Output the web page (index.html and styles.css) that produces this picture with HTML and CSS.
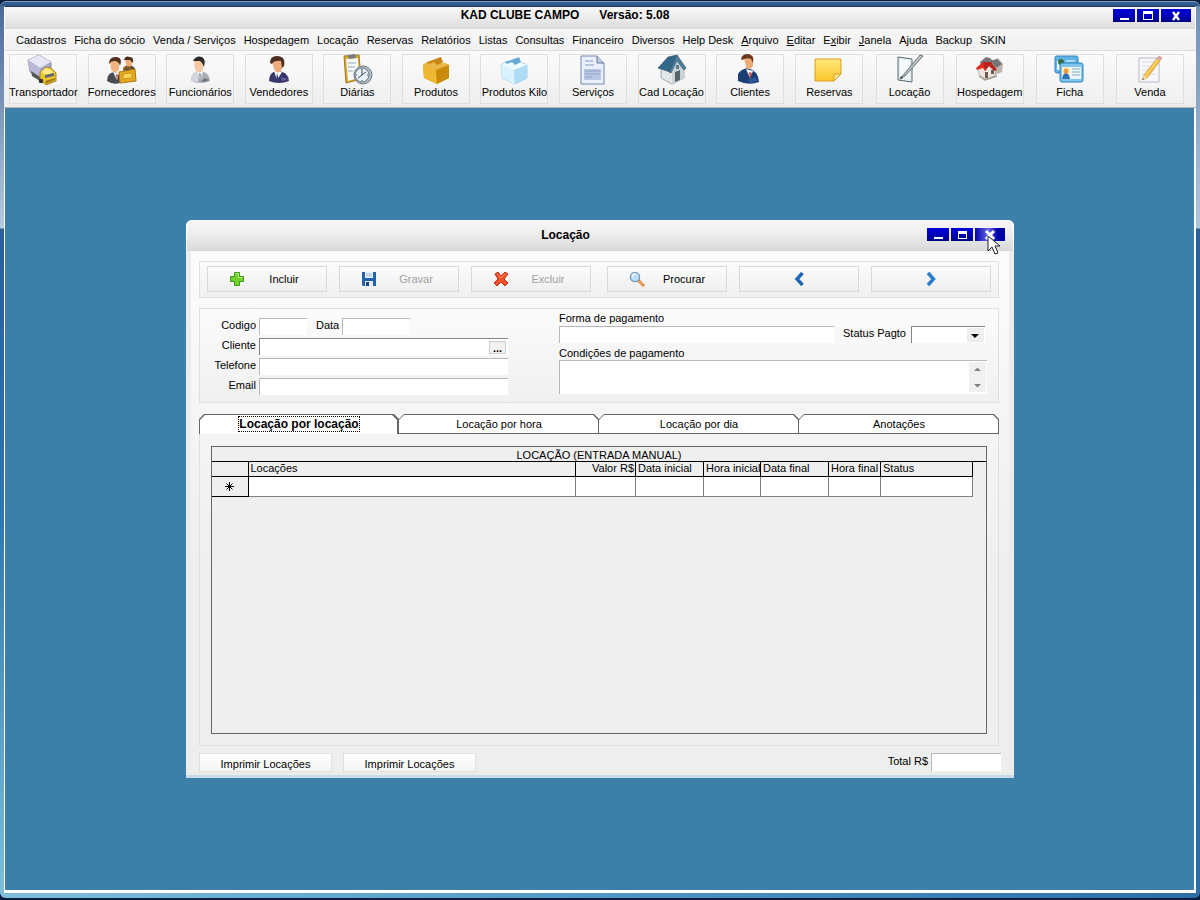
FILE: index.html
```html
<!DOCTYPE html>
<html lang="pt-BR">
<head>
<meta charset="utf-8">
<title>KAD CLUBE CAMPO</title>
<link rel="stylesheet" href="styles.css">
</head>
<body>
<div class="app">
  <header class="titlebar">
    <h1 class="title"><span>KAD CLUBE CAMPO</span><span>Versão: 5.08</span></h1>
    <div class="controls">
      <button class="ctl" aria-label="Minimizar"><svg width="12" height="12" viewBox="0 0 12 12"><path d="M2 8h9v2H2z" fill="#fff"/></svg></button>
      <button class="ctl" aria-label="Maximizar"><svg width="12" height="12" viewBox="0 0 12 12"><path d="M1 1h10v9H1zM2 4v5h8V4z" fill="#fff" fill-rule="evenodd"/></svg></button>
      <button class="ctl ctl-close" aria-label="Fechar"><svg width="12" height="12" viewBox="0 0 12 12"><path d="M3 2l6 8M9 2l-6 8" stroke="#fff" stroke-width="2.4"/></svg></button>
    </div>
  </header>
  <nav class="menu">
    <a href="#">Cadastros</a><a href="#">Ficha do sócio</a><a href="#">Venda / Serviços</a><a href="#">Hospedagem</a><a href="#">Locação</a><a href="#">Reservas</a><a href="#">Relatórios</a><a href="#">Listas</a><a href="#">Consultas</a><a href="#">Financeiro</a><a href="#">Diversos</a><a href="#">Help Desk</a><a href="#"><u>A</u>rquivo</a><a href="#"><u>E</u>ditar</a><a href="#">E<u>x</u>ibir</a><a href="#"><u>J</u>anela</a><a href="#">Ajuda</a><a href="#">Backup</a><a href="#">SKIN</a>
  </nav>
  <div class="toolbar">
    <button class="tool"><svg viewBox="0 0 32 32"><path d="M1 6L12 1l12 7v9l-11 7L3 18z" fill="#a9a8c8" stroke="#77769c" stroke-width=".7"/><path d="M1 6L12 1l12 7-11 6z" fill="#e6e6f4"/><path d="M1 6l12 8v10L3 18z" fill="#b9b8d8"/><path d="M4 17l9 6v4l-8-5z" fill="#555"/><path d="M13 18l6-5 5 1 5 5v8l-10 4-6-5z" fill="#edc62e" stroke="#987216" stroke-width=".8"/><path d="M14 18l5-4 4 1 4 4-8 2z" fill="#ffe982"/><path d="M18 21l9-2v3l-9 2z" fill="#5f6873"/><path d="M18 27l10-3v2l-9 4z" fill="#a77a19"/><circle cx="14" cy="27" r="2.3" fill="#333"/></svg>Transportador</button>
    <button class="tool"><svg viewBox="0 0 32 32"><path d="M18 13l5-3 6 4v6H17z" fill="#4b4b50"/><path d="M19 4q4-3 7 1v6q-3 4-6 0z" fill="#efb07c"/><path d="M18 6q1-5 6-3 4 0 3 6l-3-3z" fill="#4b3021"/><path d="M1 27q0-8 7-9l8 2 1 8q-9 4-16-1z" fill="#4a4a55"/><path d="M7 18l4 8 2-7z" fill="#fff"/><path d="M10 20l1 6 1-5z" fill="#a83232"/><path d="M4 7q6-5 9 1v7q-4 7-8 0z" fill="#f1b481"/><path d="M3 10q0-8 8-7 6 1 3 9-1-5-6-5-3 0-5 3z" fill="#54301d"/><path d="M13 18l16-3 1 12-16 2z" fill="#e4a91c" stroke="#ae7710"/><path d="M18 16v-2l6-1v3" fill="none" stroke="#9a6710" stroke-width="1.5"/><path d="M17 20l9-1v5l-9 1z" fill="#f9d555" stroke="#c0851b" stroke-width=".7"/></svg>Fornecedores</button>
    <button class="tool"><svg viewBox="0 0 32 32"><path d="M7 27q0-9 8-10 10 0 11 10-9 4-19 0z" fill="#aaaeb6"/><path d="M8 21q4-5 7-4l-1 11-7-1z" fill="#d4d8de"/><path d="M13 17l3 9 3-8z" fill="#fff"/><path d="M15 19l1 8 1-7z" fill="#7b8492"/><path d="M10 7q7-5 9 1v7q-4 7-8 0z" fill="#f6c8a2"/><path d="M9 7q3-6 9-4 4 2 2 10-2-5-4-6z" fill="#2d2928"/><path d="M17 27l4-3 4 2-4 2z" fill="#71757d"/></svg>Funcionários</button>
    <button class="tool"><svg viewBox="0 0 32 32"><path d="M6 27q0-9 8-10 11 0 12 10-10 4-20 0z" fill="#39366c"/><path d="M11 17l3 9 5-8z" fill="#fff"/><path d="M14 19l-1 8 3-1z" fill="#273e82"/><path d="M9 7q8-5 10 1v7q-4 7-8 0z" fill="#efaa79"/><path d="M7 9q0-7 7-7 9 0 7 10l-2 2-1-7q-7-1-9 3z" fill="#4b2e22"/><path d="M18 23l7 2-6 2z" fill="#655f9c"/></svg>Vendedores</button>
    <button class="tool"><svg viewBox="0 0 32 32"><path d="M3 2l15-1 2 24-15 4z" fill="#d9a72d" stroke="#a77a19"/><path d="M5 5l12-1 1 20-11 3z" fill="#f7f8fa"/><path d="M7 1l7-1 1 4-7 1z" fill="#787d84"/><path d="M7 9h8M7 13h7M7 17h5" stroke="#9aa9b9"/><circle cx="22" cy="21" r="9" fill="#b2bdc6" stroke="#6f7d87"/><circle cx="21" cy="21" r="7" fill="#e6f0f7" stroke="#68747e"/><path d="M21 16v5l4-3M21 21l-4 3M21 15v1M21 26v1M15 21h1M26 21h1" stroke="#3f4a52" fill="none"/></svg>Diárias</button>
    <button class="tool"><svg viewBox="0 0 32 32"><path d="M3 11l4-3 18 1 4 2v13l-12 6-13-6z" fill="#dca01d"/><path d="M3 11l13 5 1 14-13-6z" fill="#efb732"/><path d="M3 11l5-3 16 1 5 2-13 5z" fill="#e9b745"/><path d="M7 8l14-5 2 5-6 3-3-3-5 2z" fill="#c98516"/><path d="M16 16l13-5v13l-12 6z" fill="#ca8b0d"/></svg>Produtos</button>
    <button class="tool"><svg viewBox="0 0 32 32"><path d="M3 11l4-3 18 1 4 2v13l-12 6-13-6z" fill="#b7e0f8" stroke="#8fc5e8" stroke-width=".8"/><path d="M3 11l13 5 1 14-13-6z" fill="#d8f3ff"/><path d="M3 11l5-3 16 1 5 2-13 5z" fill="#edfaff"/><path d="M7 8l14-5 2 5-6 3-3-3-5 2z" fill="#68acd5"/><path d="M16 16l13-5v13l-12 6z" fill="#afdcf5"/></svg>Produtos Kilo</button>
    <button class="tool"><svg viewBox="0 0 32 32"><path d="M4 2h16l7 7v21H4z" fill="#eaf0fa" stroke="#7388b0"/><path d="M20 2v7h7" fill="#c2cde3" stroke="#61749b"/><path d="M8 7h8M8 11h9" stroke="#b8c4dd" stroke-width="2"/><path d="M7 15h17v11H7z" fill="#bac7e3"/><path d="M8 17h15M8 20h15M8 23h7" stroke="#8da0c9"/></svg>Serviços</button>
    <button class="tool"><svg viewBox="0 0 32 32"><path d="M5 14l9-8 14 9v9l-12 6-11-6z" fill="#e3e7e9" stroke="#7e8b91" stroke-width=".7"/><path d="M16 18l6-11 6 8v9l-12 6z" fill="#cbd3d6"/><path d="M19 18l5-2v10l-5 2z" fill="#58666c"/><path d="M2 14L12 3l9-2-7 17z" fill="#346889" stroke="#294f66" stroke-width=".6"/><path d="M21 1l9 13-2 2-7-9-6 12-2-1z" fill="#517e99" stroke="#294f66" stroke-width=".6"/><path d="M20 11h3v4h-3z" fill="#5a7b91"/></svg>Cad Locação</button>
    <button class="tool"><svg viewBox="0 0 32 32"><path d="M4 27V20q2-4 9-6 11 2 12 14-10 4-21-1z" fill="#193f75"/><path d="M12 15l4 9 3-7z" fill="#fff"/><path d="M15 18l1 8 2-7z" fill="#bf4040"/><path d="M10 4q7-4 9 1v7q-4 6-7 1z" fill="#ecab77"/><path d="M7 5q1-5 7-5 7 1 5 9l-2-4q-4-2-9 1z" fill="#6b371d"/><path d="M14 26l7-3 3 4-8 2z" fill="#2c5997"/></svg>Clientes</button>
    <button class="tool"><svg viewBox="0 0 32 32"><defs><linearGradient id="note" x2="0" y2="1"><stop stop-color="#ffe978"/><stop offset="1" stop-color="#fbc62c"/></linearGradient></defs><path d="M2 5h26v15l-7 7H2z" fill="url(#note)" stroke="#d69c22"/><path d="M21 27v-7h7z" fill="#ffe994" stroke="#d69c22"/></svg>Reservas</button>
    <button class="tool"><svg viewBox="0 0 32 32"><path d="M4 3l14 2v23L4 26z" fill="#e3edf1" stroke="#596a73"/><path d="M6 5l10 2v18L6 24z" fill="#f5f9fa"/><path d="M6 25L26 1l3 1L11 22z" fill="#bec6ca" stroke="#59646a" stroke-width=".9"/><path d="M6 25l3-1-2-2z" fill="#333"/></svg>Locação</button>
    <button class="tool"><svg viewBox="0 0 32 32"><path d="M15 8l9-4 5 6-1 8-7 3-8-8z" fill="#bbb4ae"/><path d="M6 8l6-5 4 1 4 4-5 5-8-2z" fill="#777"/><path d="M17 7l6-2 5 5-6 4z" fill="#747474"/><path d="M4 14l9-5 9 7-1 6-9 3-7-4z" fill="#eee4dd" stroke="#a89b91" stroke-width=".6"/><path d="M2 14l7-6 8 1-6 8-2-3-6 2z" fill="#df3025"/><path d="M9 8h8l6 8-3 1-5-5-4 5z" fill="#b82420"/><path d="M11 18h3v6h-3zM17 16h3v4h-3z" fill="#725b58"/><path d="M5 22l6 4 12-4" stroke="#9c9a8c" fill="none" stroke-width="1.5"/></svg>Hospedagem</button>
    <button class="tool"><svg viewBox="0 0 32 32"><rect x="1" y="2" width="23" height="17" rx="2" fill="#60b3e4" stroke="#3287bc"/><path d="M3 7h7v9H3z" fill="#eef7fa"/><circle cx="7" cy="8" r="3" fill="#356c43"/><path d="M12 7h9M12 10h9" stroke="#fff"/><rect x="6" y="9" width="23" height="19" rx="2" fill="#80c5ee" stroke="#2a82ba"/><path d="M8 13h8v12H8z" fill="#fff0c8"/><path d="M16 13h11v12H16z" fill="#e9f7fc"/><path d="M8 25q1-6 4-6t4 6z" fill="#2b70be"/><circle cx="12" cy="17" r="2.5" fill="#ea9b3c"/><path d="M18 15h8M18 18h8M18 21h8" stroke="#8daabd"/></svg>Ficha</button>
    <button class="tool"><svg viewBox="0 0 32 32"><path d="M5 4h20v24H5z" fill="#f7f7fc" stroke="#b8bac6"/><path d="M8 8h13M8 12h13M8 16h13M8 20h13" stroke="#d9dce8"/><path d="M8 26l2-5L25 2l3 2-15 20z" fill="#f5c33d" stroke="#c8953d" stroke-width=".8"/><path d="M25 2l3 2-2 3-3-3z" fill="#d6a6c4"/><path d="M8 26l2-5 3 3z" fill="#f6dfb2"/><path d="M8 26l1-2 1 1z" fill="#555"/><path d="M12 21L24 6" stroke="#ffe37c"/></svg>Venda</button>
  </div>
  <main class="desktop">
    <section class="dialog" aria-labelledby="dlg-title">
      <header class="titlebar dialog-titlebar">
        <h2 class="title" id="dlg-title">Locação</h2>
        <div class="controls">
          <button class="ctl" aria-label="Minimizar janela"><svg width="12" height="12" viewBox="0 0 12 12"><path d="M2 8h9v2H2z" fill="#fff"/></svg></button>
          <button class="ctl" aria-label="Maximizar janela"><svg width="12" height="12" viewBox="0 0 12 12"><path d="M2 2h9v8H2zM3 5v4h7V5z" fill="#fff" fill-rule="evenodd"/></svg></button>
          <button class="ctl ctl-close ctl-hot" aria-label="Fechar janela"><svg width="12" height="12" viewBox="0 0 12 12"><path d="M2 2l8 8M10 2l-8 8" stroke="#fff" stroke-width="3"/></svg></button>
          <svg class="pointer" width="14" height="20" viewBox="0 0 14 20"><path d="M1 1v15l4-4 3 7 3-1-3-7h5z" fill="#fff" stroke="#222"/></svg>
        </div>
      </header>
      <div class="dialog-body">
        <div class="group actions">
          <div class="action-set">
            <button class="btn action"><svg viewBox="0 0 16 16"><path d="M5.500 1.500h5v4h4v5h-4v4h-5v-4h-4v-5h4z" fill="#72d12e" stroke="#3c981e"/><path d="M6.500 2.500h3v4h4" fill="none" stroke="#b5f07d"/></svg><span>Incluir</span></button>
            <button class="btn action" disabled><svg viewBox="0 0 16 16"><path d="M1 1h14v14H2l-1-1z" fill="#2461ad"/><path d="M4 1h8v6H4z" fill="#e9f3fc"/><path d="M5 3h6M5 5h6" stroke="#9ab9d9"/><path d="M4 10h8v5H4z" fill="#e4edf6"/><path d="M5 11h3v4H5z" fill="#174881"/></svg><span>Gravar</span></button>
            <button class="btn action" disabled><svg viewBox="0 0 16 16"><path d="M2 3l3-2 3 4 4-4 3 2-4 5 4 4-3 3-4-4-4 4-3-3 4-4z" fill="#ef5026" stroke="#c5321a"/><path d="M4 3l4 4 4-4" fill="none" stroke="#ff9069"/></svg><span>Excluir</span></button>
          </div>
          <div class="action-set">
            <button class="btn action"><svg viewBox="0 0 16 16"><path d="M9 9l6 6" stroke="#d8853b" stroke-width="3"/><path d="M9 9l5 5" stroke="#f5c48c"/><circle cx="6" cy="6" r="4.600" fill="#b9dff8" stroke="#7596b8" stroke-width="1.300"/><path d="M3.500 6q0-3 3-3" stroke="#fff" fill="none" stroke-width="1.300"/></svg><span>Procurar</span></button>
            <button class="btn" aria-label="Anterior"><svg viewBox="0 0 16 16"><path d="M11.500 2L6 8l5.500 6" fill="none" stroke="#1f68b4" stroke-width="3.400"/></svg></button>
            <button class="btn" aria-label="Próximo"><svg viewBox="0 0 16 16"><path d="M5 2l5.500 6L5 14" fill="none" stroke="#2a7dcc" stroke-width="3.400"/></svg></button>
          </div>
        </div>
        <form class="group form">
          <div class="fields">
            <label for="codigo">Codigo</label>
            <div class="inline"><input class="field short" id="codigo"><label for="data">Data</label><input class="field medium" id="data"></div>
            <label for="cliente">Cliente</label>
            <div class="lookup"><input class="field dark" id="cliente"><button type="button" class="more" aria-label="Buscar cliente">...</button></div>
            <label for="telefone">Telefone</label>
            <input class="field" id="telefone">
            <label for="email">Email</label>
            <input class="field" id="email">
          </div>
          <div class="payment">
            <label for="forma">Forma de pagamento</label>
            <div class="pay-row">
              <input class="field grow" id="forma">
              <label for="status">Status Pagto</label>
              <div class="drop"><select class="field dark" id="status"><option></option></select><svg width="17" height="14" viewBox="0 0 17 14"><path d="M0 0h17v14H0z" fill="#eee"/><path d="M4 6h8l-4 4z" fill="#000"/></svg></div>
            </div>
            <label for="condicoes">Condições de pagamento</label>
            <div class="memo"><textarea class="field" id="condicoes"></textarea><svg width="17" height="30" viewBox="0 0 17 30"><path d="M0 0h17v30H0z" fill="#f0f0f0"/><path d="M5 9h7L8.500 5.500zM5 22h7l-3.500 3.500z" fill="#808080"/></svg></div>
          </div>
        </form>
        <div class="tabs" role="tablist">
          <button class="tab" role="tab" aria-selected="true"><span>Locação por locação</span></button>
          <button class="tab" role="tab" aria-selected="false"><span>Locação por hora</span></button>
          <button class="tab" role="tab" aria-selected="false"><span>Locação por dia</span></button>
          <button class="tab" role="tab" aria-selected="false"><span>Anotações</span></button>
        </div>
        <div class="panel">
          <div class="sheet">
            <h3 class="sheet-title">LOCAÇÃO (ENTRADA MANUAL)</h3>
            <div class="sheet-body">
              <table>
                <colgroup><col class="c-mark"><col><col class="c-valor"><col class="c-date"><col class="c-hour"><col class="c-date"><col class="c-end"><col class="c-status"></colgroup>
                <thead><tr><th></th><th>Locações</th><th class="num">Valor R$</th><th>Data inicial</th><th>Hora inicial</th><th>Data final</th><th>Hora final</th><th>Status</th></tr></thead>
                <tbody><tr><th scope="row"><svg width="9" height="9" viewBox="0 0 9 9"><path d="M4.500 0v9M0 4.500h9M1.500 1.500l6 6M7.500 1.500l-6 6" stroke="#000"/></svg></th><td></td><td></td><td></td><td></td><td></td><td></td><td></td></tr></tbody>
              </table>
            </div>
          </div>
        </div>
        <footer class="foot">
          <button class="btn print">Imprimir Locações</button>
          <button class="btn print">Imprimir Locações</button>
          <label for="total">Total R$</label>
          <input class="field" id="total">
        </footer>
      </div>
    </section>
  </main>
</div>
</body>
</html>
```
FILE: styles.css
```css
* { box-sizing: border-box; }
body {
  margin: 0;
  min-height: 100vh;
  display: flex;
  padding: 1px 0 2px;
  background: #0b1d3a;
  color: #000;
  font: 11px/14px "Liberation Sans", Arial, sans-serif;
}
button, input, select, textarea { font: inherit; color: inherit; margin: 0; padding: 0; border: 0; border-radius: 0; }
button { white-space: nowrap; }
a { color: inherit; text-decoration: none; }
h1, h2, h3 { margin: 0; font-size: 12px; }

.app {
  flex: 1;
  display: flex;
  flex-direction: column;
  padding: 4px 4px 5px;
  border-top: 1px solid #8199b8;
  border-radius: 6px;
  background:
    linear-gradient(#33619a, #2d5788) top / 100% 4px no-repeat,
    linear-gradient(90deg, #7fbedd, #4f97c6 50%, #2d6da6) bottom / 100% 5px no-repeat,
    linear-gradient(#4a6798, #b5cbe0 226px, #2a5f98 227px, #2f74ab 500px, #7fbedd) left / 4px 100% no-repeat,
    linear-gradient(#6f8fb4, #b0c5dc 226px, #2a5f98 227px, #2d6da6) right / 4px 100% no-repeat;
}

.titlebar {
  display: flex;
  height: 23px;
  padding: 2px 4px 0 12px;
  background: linear-gradient(#f8f8f8, #ededed 45%, #dadada);
  border-left: 1px solid #fff;
  border-right: 1px solid #fff;
}
.app > .titlebar { border-top: 1px solid #1b365d; }
.title { flex: 1; display: flex; justify-content: center; gap: 20px; line-height: 12px; }
.controls { display: flex; gap: 2px; position: relative; }
.ctl {
  width: 22px;
  height: 13px;
  display: grid;
  place-items: center;
  background: linear-gradient(#0000d8, #0000b4 60%, #000080);
}
.ctl-close { width: 30px; }
.ctl-hot { background: linear-gradient(90deg, #0000a8, #6a6ae6 45%, #0000a8 75%); }
.pointer { position: absolute; left: 60px; top: 7px; }

.menu {
  display: flex;
  gap: 0 8px;
  height: 21px;
  align-items: center;
  padding: 1px 11px 0;
  background: linear-gradient(#f7f7f7, #f0f0f0);
  border-left: 1px solid #fff;
  white-space: nowrap;
}
.toolbar {
  display: grid;
  grid-template-columns: repeat(10, 49fr) repeat(5, 50fr);
  justify-items: center;
  padding: 3px 6px 3px 0;
  border-top: 1px solid #dcdcdc;
  border-bottom: 1px solid #b9b4b4;
  background: linear-gradient(#fbfbfb, #ececec);
}
.tool {
  width: 68px;
  height: 50px;
  display: flex;
  flex-direction: column;
  align-items: center;
  border: 1px solid #dedede;
  background: linear-gradient(#fafafa, #f0f0f0);
}
.tool svg { width: 32px; height: 32px; flex: none; margin: -1px 0; }

.desktop {
  flex: 1;
  display: flex;
  padding: 112px 180px 112px 181px;
  background: #3c80aa;
  border: 1px solid #fff;
  border-width: 0 2px 3px 1px;
}
.dialog {
  flex: 1;
  min-width: 0;
  display: flex;
  flex-direction: column;
  padding-bottom: 3px;
  background: #c8dbe8;
  border-radius: 6px 6px 0 0;
}
.dialog-titlebar {
  height: 30px;
  padding: 8px 8px 0 17px;
  border-radius: 6px 6px 0 0;
}
.dialog-titlebar .title { line-height: 14px; }
.dialog-body {
  flex: 1;
  display: flex;
  flex-direction: column;
  padding: 10px 10px 0 8px;
  border: solid #ececea;
  border-width: 1px 5px 3px;
  border-top-color: #d5d5d5;
  background: linear-gradient(#fcfcfc, #eee 65%);
}
.group { border: 1px solid #e0e0e0; background: linear-gradient(#fbfbfb, #f0f0f0); }
.actions { display: flex; gap: 16px; padding: 4px 7px 5px; margin-bottom: 10px; }
.action-set { flex: 1; display: flex; gap: 12px; }
.btn {
  display: flex;
  align-items: center;
  justify-content: center;
  border: 1px solid #d9d9d9;
  background: linear-gradient(#fcfcfc, #efefef);
}
.btn svg { width: 16px; height: 16px; flex: none; }
.action-set .btn { flex: 1 1 0; min-width: 0; height: 26px; }
.action span { width: 62px; text-align: center; }
.action svg { margin-left: 10px; }
.action { gap: 8px; }
.action:disabled { color: #a0a0a0; }

.form { display: flex; gap: 51px; padding: 0 11px 7px; margin-bottom: 11px; }
.fields {
  display: grid;
  grid-template-columns: 45px 249px;
  grid-auto-rows: 17px;
  gap: 3px;
  padding-top: 9px;
}
.fields > label { text-align: right; }
.inline { display: flex; gap: 9px; }
.inline label { margin-right: -6px; }
.field {
  width: 100%;
  height: 17px;
  background: #fff;
  border: solid #b8b8b8;
  border-width: 1px 0 0 1px;
}
.dark { border-color: #858585; }
.inline .short { width: 48px; }
.inline .medium { width: 68px; }
.lookup, .drop, .memo { position: relative; }
.more {
  position: absolute;
  right: 2px;
  top: 3px;
  width: 17px;
  height: 13px;
  border: 1px solid #ccc;
  background: #f2f2f2;
  font-weight: bold;
  line-height: 8px;
}
.payment { flex: 1; min-width: 0; padding-top: 2px; }
.payment > label { display: block; }
.pay-row { display: flex; gap: 9px; padding: 1px 2px 3px 0; }
.pay-row label { margin-right: -4px; }
.grow { flex: 1; min-width: 0; }
.drop { width: 74px; }
.drop select { appearance: none; }
.drop svg { position: absolute; right: 1px; top: 2px; pointer-events: none; }
.memo textarea { display: block; height: 34px; resize: none; }
.memo svg { position: absolute; right: 1px; top: 2px; }

.tabs { display: flex; }
.tab {
  flex: 1;
  height: 20px;
  position: relative;
  isolation: isolate;
  background: #666;
  clip-path: polygon(5px 0, calc(100% - 5px) 0, 100% 5px, 100% 100%, 0 100%, 0 5px);
}
.tab::before {
  content: "";
  position: absolute;
  inset: 1px 1px 1px 0;
  z-index: -1;
  background: #fff;
  clip-path: polygon(5px 0, calc(100% - 5px) 0, 100% 5px, 100% 100%, 0 100%, 0 5px);
}
.tab[aria-selected="true"] { font-size: 12px; font-weight: bold; }
.tab[aria-selected="true"]::before { inset: 1px 2px 0 1px; }
.tab[aria-selected="true"] span { outline: 1px dotted #000; }
.panel {
  flex: 1;
  display: flex;
  padding: 12px 11px 11px;
  border: 1px solid #e0e0e0;
  border-top: 0;
}
.sheet { flex: 1; min-width: 0; border: 1px solid #666; background: #efefef; }
.sheet-title { height: 15px; border-bottom: 1px solid #000; font-size: 11px; font-weight: normal; line-height: 16px; text-align: center; }
.sheet-body { padding-right: 13px; }
table { width: 100%; table-layout: fixed; border-collapse: collapse; }
th, td { padding: 0 0 0 2px; text-align: left; font-weight: normal; white-space: nowrap; }
thead th { height: 14px; line-height: 13px; border: solid #000; border-width: 0 1px 1px 0; }
tbody td { height: 20px; background: #fff; border: solid #808080; border-width: 0 1px 1px 0; }
tbody th { padding: 0; text-align: center; border: solid #000; border-width: 0 1px 1px 0; }
tbody svg { display: block; margin: auto; }
th.num { padding-right: 1px; text-align: right; }
.c-mark { width: 36px; }
.c-valor { width: 60px; }
.c-date { width: 68px; }
.c-hour { width: 57px; }
.c-end { width: 52px; }
.c-status { width: 92px; }

.foot { display: flex; gap: 11px; padding-top: 7px; margin-right: -2px; }
.print { width: 133px; height: 19px; padding-top: 2px; background: linear-gradient(#fff, #f4f4f4); border-color: #e0e0e0; }
.foot label { margin: 1px -8px 0 auto; }
.foot .field { width: 70px; height: 18px; }
```
